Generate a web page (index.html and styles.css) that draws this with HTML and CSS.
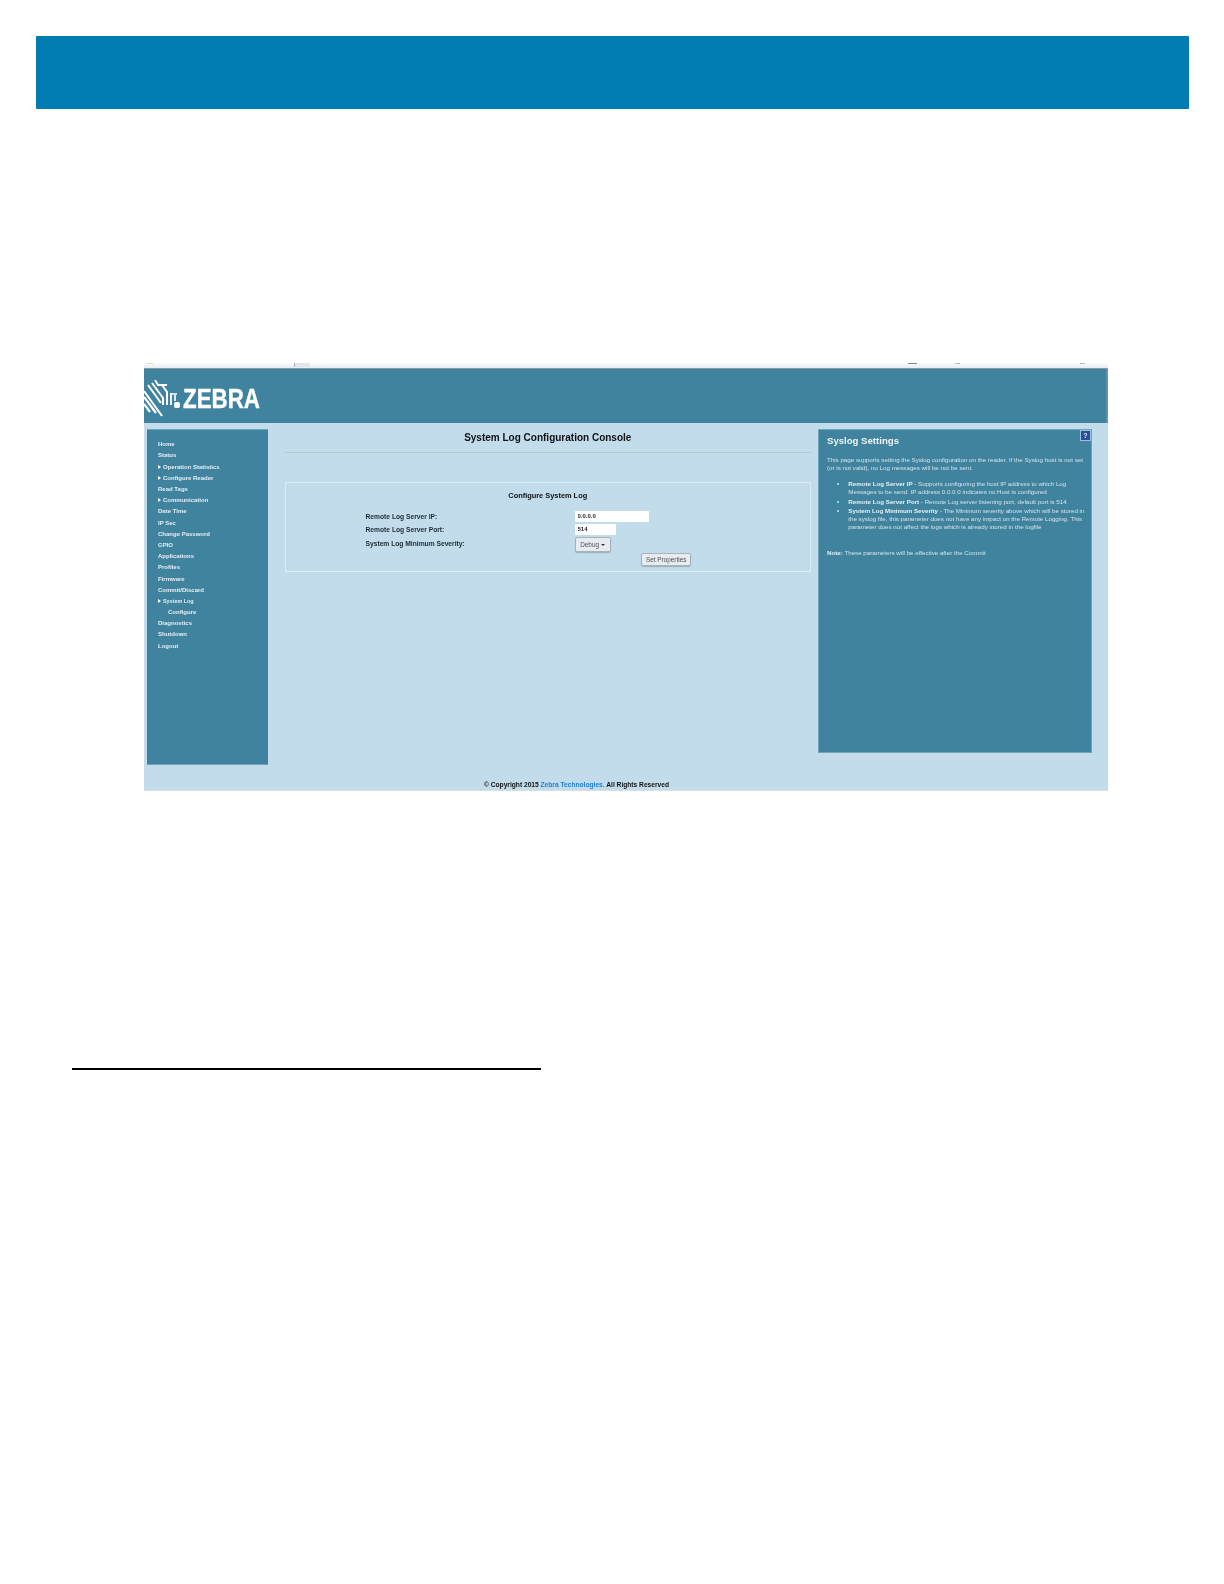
FILE: index.html
```html
<!DOCTYPE html>
<html lang="en">
  <head>
    <meta charset="UTF-8" />
    <title>System Log Configuration</title>
    <link rel="stylesheet" href="styles.css">
  </head>
  <body>
    <div class="banner"></div>

    <div class="shot">
      <div class="browser-bar">
        <span class="mark mark-icon"></span>
        <span class="tab"></span>
        <span class="mark mark-a"></span>
        <span class="mark mark-b"></span>
        <span class="mark mark-c"></span>
      </div>

      <div class="top-header">
        <svg class="logo" width="140" height="38" viewBox="0 0 140 38">
          <g fill="none" stroke="#fff">
            <path d="M0 11 L18 36" stroke-width="2" />
            <path d="M0 17 L12 33" stroke-width="2.2" />
            <path d="M0 24 L6 32" stroke-width="2.2" />
            <path d="M4 5 L17 23" stroke-width="2" />
            <path d="M8 3 L19 18 L19 25" stroke-width="2" />
            <path d="M11 0 L14 5 L23 5 M18 5 L23 12 L23 25" stroke-width="2" />
            <path d="M27 13 L27 25" stroke-width="1.8" />
            <path d="M27 14 L33 14 M31 15 L31 21" stroke-width="1.6" />
          </g>
          <rect x="30" y="22" width="6" height="6" rx="2" fill="#fff" />
          <text class="logo-word" x="39" y="28.3" textLength="77" lengthAdjust="spacingAndGlyphs">ZEBRA</text>
        </svg>
      </div>

      <div class="shot-body">
        <ul class="side-nav">
          <li>Home</li>
          <li>Status</li>
          <li class="has-arrow">Operation Statistics</li>
          <li class="has-arrow">Configure Reader</li>
          <li>Read Tags</li>
          <li class="has-arrow">Communication</li>
          <li>Date Time</li>
          <li>IP Sec</li>
          <li>Change Password</li>
          <li>GPIO</li>
          <li>Applications</li>
          <li>Profiles</li>
          <li>Firmware</li>
          <li>Commit/Discard</li>
          <li class="has-arrow small">System Log</li>
          <li class="sub">Configure</li>
          <li>Diagnostics</li>
          <li>Shutdown</li>
          <li>Logout</li>
        </ul>

        <div class="console">
          <h1>System Log Configuration Console</h1>
          <div class="config-box">
            <h2>Configure System Log</h2>
            <div class="form-grid">
              <label>Remote Log Server IP:</label>
              <div class="field"><input class="input-ip" type="text" value="0.0.0.0" /></div>
              <label>Remote Log Server Port:</label>
              <div class="field"><input class="input-port" type="text" value="514" /></div>
              <label>System Log Minimum Severity:</label>
              <div class="field"><button class="btn btn-debug" type="button">Debug <span class="caret"></span></button></div>
            </div>
            <div class="form-actions">
              <button class="btn btn-set" type="button">Set Properties</button>
            </div>
          </div>
        </div>

        <div class="help-panel">
          <span class="help-icon">?</span>
          <h3>Syslog Settings</h3>
          <p>This page supports setting the Syslog configuration on the reader. If the Syslog host is not set<br>(or is not valid), no Log messages will be not be sent.</p>
          <ul>
            <li><b>Remote Log Server IP</b> - Supports configuring the host IP address to which Log<br>Messages to be send. IP address 0.0.0.0 indicates no Host is configured</li>
            <li><b>Remote Log Server Port</b> - Remote Log server listening port, default port is 514</li>
            <li><b>System Log Minimum Severity</b> - The Minimum severity above which will be stored in<br>the syslog file, this parameter does not have any impact on the Remote Logging. This<br>parameter does not affect the logs which is already stored in the logfile</li>
          </ul>
          <p class="note"><b>Note:</b> These parameters will be effective after the Commit</p>
        </div>
      </div>

      <div class="shot-footer">&copy; Copyright 2015 <a href="#">Zebra Technologies.</a> All Rights Reserved</div>
    </div>

    <div class="rule"></div>
  </body>
</html>
```

FILE: styles.css
```css
body {
  margin: 0;
  background: #fff;
  font-family: "Liberation Sans", Arial, sans-serif;
  height: 1584px;
  overflow: hidden;
}

.banner {
  height: 73px;
  margin: 36px 35px 0 36px;
  background: #007cb2;
  border-radius: 1px;
}

.shot {
  width: 964px;
  height: 428px;
  margin: 254px 0 0 144px;
  background: #c2dcec;
  display: flex;
  flex-direction: column;
  filter: blur(0.35px);
}

.browser-bar {
  height: 5px;
  background: linear-gradient(#fbfcfd, #e7ebf1);
  border-bottom: 1px solid #8d9aa3;
  display: flex;
  align-items: flex-start;
  flex-shrink: 0;
}
.tab {
  width: 15px;
  height: 4px;
  margin-left: 141px;
  border-left: 1px solid #aeb5bb;
  background: #e2e6ec;
}
.mark {
  height: 1px;
  background: #7f868c;
}
.mark-icon {
  width: 6px;
  margin-left: 3px;
  background: #e6d9a8;
}
.mark-a {
  width: 9px;
  margin-left: 598px;
}
.mark-b {
  width: 5px;
  margin-left: 38px;
  background: #b5bbc0;
}
.mark-c {
  width: 5px;
  margin-left: 120px;
  background: #b5bbc0;
}

.top-header {
  height: 54px;
  background: #40839f;
  border-right: 2px solid #5d93ab;
  display: flex;
  align-items: flex-start;
  flex-shrink: 0;
}
.logo {
  margin-top: 11px;
}
.logo-word {
  fill: #fff;
  stroke: #fff;
  stroke-width: 0.4;
  font-size: 28px;
  font-weight: bold;
  font-family: "Liberation Sans", Arial, sans-serif;
}

.shot-body {
  display: flex;
  align-items: flex-start;
  height: 355px;
  padding: 6px 0 0 3px;
  box-sizing: border-box;
  flex-shrink: 0;
}

.side-nav {
  list-style: none;
  margin: 0;
  padding: 9.3px 0 0 11px;
  width: 121px;
  height: 336px;
  box-sizing: border-box;
  background: #40839f;
  border: 1px solid #6ea3ba;
  border-width: 1px 0 1px 0;
  flex-shrink: 0;
}
.side-nav li {
  height: 11.2px;
  line-height: 11px;
  font-size: 6px;
  font-weight: bold;
  color: #e4eef3;
  white-space: nowrap;
}
.side-nav .has-arrow {
  position: relative;
  padding-left: 5px;
}
.side-nav .has-arrow::before {
  content: "";
  position: absolute;
  left: 0;
  top: 3px;
  border-left: 3px solid #fff;
  border-top: 2.5px solid transparent;
  border-bottom: 2.5px solid transparent;
}
.side-nav .small {
  font-size: 5.4px;
}
.side-nav .sub {
  padding-left: 10px;
}

.console {
  width: 526.5px;
  margin-left: 16.5px;
  flex-shrink: 0;
}
.console h1 {
  margin: 0;
  height: 20px;
  padding-top: 3px;
  line-height: 12px;
  font-size: 10px;
  text-align: center;
  color: #111;
  border-bottom: 1px solid #b5c8d4;
}
.config-box {
  margin-top: 29px;
  height: 90px;
  border: 1px solid #dfeef6;
  border-radius: 1px;
  box-sizing: border-box;
}
.config-box h2 {
  margin: 0;
  padding-top: 7px;
  height: 21px;
  line-height: 11px;
  font-size: 7.4px;
  text-align: center;
  color: #111;
}
.form-grid {
  display: grid;
  grid-template-columns: 209px 1fr;
  grid-template-rows: 13px 12.5px 17px;
  padding-left: 80px;
}
.form-grid label {
  font-size: 6.7px;
  font-weight: bold;
  line-height: 11px;
  color: #1d2a33;
}
.form-grid label:last-of-type {
  line-height: 14px;
}
.field input {
  display: block;
  height: 10.5px;
  padding: 0 0 0 3px;
  border: 0;
  border-radius: 1px;
  background: #fff;
  font-family: inherit;
  font-size: 6px;
  font-weight: bold;
  color: #222;
  box-sizing: border-box;
}
.input-ip {
  width: 74px;
}
.input-port {
  width: 41px;
}
.btn {
  display: block;
  padding: 0;
  border: 1px solid #a9b2b8;
  border-radius: 2px;
  background: #e9ecee;
  font-family: inherit;
  font-size: 6.4px;
  color: #4a5156;
  box-shadow: 0 1px 1px rgba(0, 0, 0, 0.2);
}
.btn-debug {
  width: 36px;
  height: 15px;
}
.caret {
  display: inline-block;
  border-top: 2px solid #333;
  border-left: 2px solid transparent;
  border-right: 2px solid transparent;
  vertical-align: middle;
}
.form-actions {
  display: flex;
  padding-left: 355.7px;
  margin-top: -1px;
}
.btn-set {
  width: 50px;
  height: 13px;
}

.help-panel {
  position: relative;
  width: 274px;
  height: 324px;
  margin-left: 7px;
  padding: 5px 0 0 8px;
  box-sizing: border-box;
  background: #40839f;
  border: 1px solid #6ea3ba;
  color: #d3e2e9;
  font-size: 6.2px;
  line-height: 8.2px;
  white-space: nowrap;
  flex-shrink: 0;
}
.help-panel h3 {
  margin: 0 0 9px;
  font-size: 9.6px;
  line-height: 12px;
  color: #eef4f7;
}
.help-panel p {
  margin: 0;
}
.help-panel ul {
  margin: 7.6px 0 0;
  padding-left: 21.3px;
}
.help-panel li {
  margin-bottom: 1.2px;
}
.help-panel b {
  color: #e6eff3;
}
.help-panel .note {
  margin-top: 17.5px;
}
.help-icon {
  position: absolute;
  top: 0;
  right: 0;
  width: 9px;
  height: 9px;
  line-height: 9px;
  background: #2b4e9b;
  border: 1px solid #9cc0d6;
  color: #dfe8f5;
  font-size: 7px;
  font-weight: bold;
  text-align: center;
}

.shot-footer {
  height: 13px;
  padding-left: 340px;
  line-height: 14px;
  font-size: 6.65px;
  font-weight: bold;
  color: #111;
  border-bottom: 1px solid #d8dfe3;
  box-sizing: border-box;
  white-space: nowrap;
}
.shot-footer a {
  color: #1f7ed0;
  text-decoration: none;
}

.rule {
  width: 469px;
  height: 2px;
  margin: 277px 0 0 72px;
  background: #000;
}
```
